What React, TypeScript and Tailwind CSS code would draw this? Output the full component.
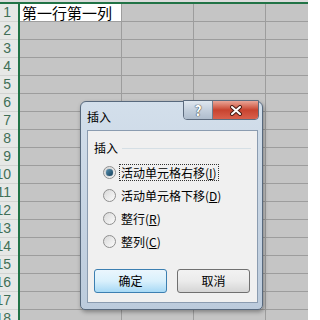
import React from 'react';

const rows = Array.from({ length: 18 }, (_, i) => i + 1);

const options = [
  { label: '活动单元格右移', key: 'I', checked: true },
  { label: '活动单元格下移', key: 'D', checked: false },
  { label: '整行', key: 'R', checked: false },
  { label: '整列', key: 'C', checked: false },
];

const Radio: React.FC<{ checked: boolean }> = ({ checked }) => (
  <span className="flex h-[13px] w-[13px] shrink-0 items-center justify-center rounded-full border border-[#8f8f8f] bg-gradient-to-br from-[#d9d9d9] to-[#fbfbfb]">
    {checked && (
      <span className="h-[7px] w-[7px] rounded-full bg-gradient-to-br from-[#5a93b3] to-[#123f5a] shadow-[0_0_1px_#0b2d44]" />
    )}
  </span>
);

const InsertDialog: React.FC = () => (
  <div className="absolute left-[80px] top-[101px] flex h-[209px] w-[183px] flex-col rounded-t-[6px] rounded-b-[5px] border border-[#58697d] bg-gradient-to-b from-[#d3dfeb] to-[#bccbdc] shadow-[1px_2px_4px_rgba(0,0,0,0.35)]">
    <div className="flex h-[28px] items-start">
      <span className="pl-[6px] pt-[7px] text-[12px] leading-[16px] text-black">插入</span>
      <div className="ml-auto mr-[3px] mt-[-2px] flex h-[20px] overflow-hidden rounded-b-[4px] border border-[#5d6c7e]">
        <div className="flex w-[29px] items-center justify-center border-r border-[#6f7e8f] bg-gradient-to-b from-[#dfe7ef] via-[#c4d0dd] to-[#aebdcd]">
          <span className="text-[14px] font-bold leading-none text-white [text-shadow:0_0_1px_#2a2a2a,0_0_1px_#2a2a2a]">?</span>
        </div>
        <div className="flex w-[45px] items-center justify-center bg-gradient-to-b from-[#e9a597] via-[#c8432f] to-[#d9604c]">
          <svg width="14" height="11" viewBox="0 0 14 11">
            <path d="M3 2 L11 9 M11 2 L3 9" stroke="#4a1d15" strokeWidth="4" strokeLinecap="round" />
            <path d="M3 2 L11 9 M11 2 L3 9" stroke="#ffffff" strokeWidth="2" strokeLinecap="round" />
          </svg>
        </div>
      </div>
    </div>
    <div className="mx-[6px] mb-[6px] mr-[4px] flex flex-1 flex-col border border-[#8b9cb0] bg-[#f0f0f0]">
      <div className="flex items-center pl-[6px] pt-[9px]">
        <span className="text-[12px] leading-[16px] text-black">插入</span>
        <span className="ml-[4px] mr-[6px] h-px flex-1 bg-[#d5dfe5]" />
      </div>
      <div className="flex flex-col gap-[6px] pl-[15px] pt-[8px]">
        {options.map((o) => (
          <div key={o.key} className="flex h-[17px] items-center">
            <Radio checked={o.checked} />
            <span
              className={
                o.checked
                  ? 'ml-[3px] border border-dotted border-[#333] px-[1px] text-[12px] leading-[15px] text-black'
                  : 'ml-[4px] px-[1px] text-[12px] leading-[15px] text-black'
              }
            >
              {o.label}(<span className="underline">{o.key}</span>)
            </span>
          </div>
        ))}
      </div>
      <div className="mt-auto flex gap-[10px] pb-[9px] pl-[6px]">
        <button className="h-[24px] w-[73px] rounded-[3px] border border-[#3c7fb1] bg-gradient-to-b from-[#eaf6fd] via-[#d9f0fc] to-[#a7d9f5] text-[12px] text-black">
          确定
        </button>
        <button className="h-[24px] w-[73px] rounded-[3px] border border-[#707070] bg-gradient-to-b from-[#f2f2f2] via-[#ebebeb] to-[#d5d5d5] text-[12px] text-black">
          取消
        </button>
      </div>
    </div>
  </div>
);

export default function App() {
  return (
    <div className="relative h-[320px] w-[308px] overflow-hidden bg-[#c5c5c5] font-['Noto_Sans_CJK_SC',sans-serif]">
      <div className="h-[2px] bg-[#dcdcdc]" />
      <div className="h-[2px] bg-[#217346]" />
      <div className="flex">
        <div className="flex w-[18px] flex-col bg-[#e6e8e6]">
          {rows.map((r) => (
            <div
              key={r}
              className="flex h-[18px] items-center justify-end overflow-hidden border-b border-[#d2d4d2] pr-[7px] font-['Liberation_Sans',sans-serif] text-[14px] text-[#3f6f57]"
            >
              {r}
            </div>
          ))}
        </div>
        <div className="w-[2px] bg-[#217346]" />
        <div className="flex flex-1 flex-col">
          {rows.map((r) => (
            <div key={r} className="flex h-[18px] border-b border-[#9d9d9d]">
              <div
                className={
                  r === 1
                    ? 'w-[102px] border-r border-[#9d9d9d] bg-white pl-[2px] text-[15px] leading-[17px] text-black'
                    : 'w-[102px] border-r border-[#9d9d9d]'
                }
              >
                {r === 1 ? '第一行第一列' : null}
              </div>
              <div className="w-[72px] border-r border-[#9d9d9d]" />
              <div className="w-[72px] border-r border-[#9d9d9d]" />
              <div className="flex-1" />
            </div>
          ))}
        </div>
      </div>
      <InsertDialog />
    </div>
  );
}
